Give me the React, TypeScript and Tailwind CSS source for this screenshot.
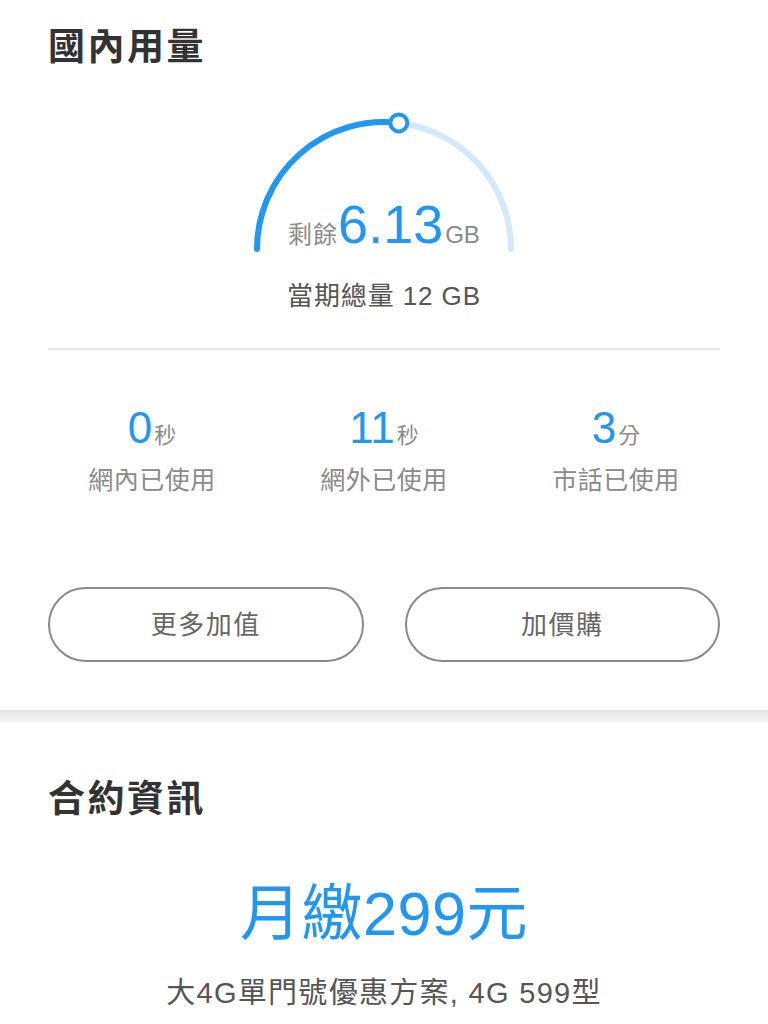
import React from "react";

function Gauge() {
  return (
    <div className="relative mx-auto mt-[42px] h-[150px] w-[280px]">
      <svg width="280" height="150" viewBox="0 0 280 150" className="absolute left-0 top-0">
        <path d="M 154.8 14.9 A 127 127 0 0 1 267 141" fill="none" stroke="#d4e8fc" strokeWidth="6" strokeLinecap="round" />
        <path d="M 13 141 A 127 127 0 0 1 154.8 14.9" fill="none" stroke="#2196f3" strokeWidth="6" strokeLinecap="round" />
        <circle cx="154.8" cy="14.9" r="8.5" fill="#ffffff" stroke="#2196f3" strokeWidth="4" />
      </svg>
      <div className="absolute inset-x-0 bottom-[7px] flex items-baseline justify-center">
        <span className="text-[24px] leading-none tracking-[1px] text-[#8a8a8a]">剩餘</span>
        <span className="text-[54px] leading-none text-[#2196f3]">6.13</span>
        <span className="ml-[2px] text-[24px] leading-none text-[#8a8a8a]">GB</span>
      </div>
    </div>
  );
}

function Stat({ value, unit }: { value: string; unit: string }) {
  return (
    <div className="flex items-baseline justify-center">
      <span className="text-[44px] leading-none text-[#2196f3]">{value}</span>
      <span className="ml-[2px] text-[22px] leading-none text-[#8a8a8a]">{unit}</span>
    </div>
  );
}

export default function App() {
  const stats = [
    { value: "0", unit: "秒", label: "網內已使用" },
    { value: "11", unit: "秒", label: "網外已使用" },
    { value: "3", unit: "分", label: "市話已使用" },
  ];
  return (
    <div className="min-h-[1024px] w-full bg-white font-['Liberation_Sans','Noto_Sans_CJK_TC',sans-serif]">
      <div className="flex flex-col pb-[48px] pt-[29px]">
        <h1 className="px-12 text-[37px] font-bold leading-none tracking-[2.5px] text-[#333333]">國內用量</h1>
        <Gauge />
        <div className="mt-[25px] text-center text-[26px] leading-none tracking-[0.9px] text-[#555555]">當期總量 12 GB</div>
        <div className="mx-12 mt-[39px] h-[2px] bg-[#e8e8e8]" />
        <div className="mt-[56px] grid grid-cols-3 px-9">
          {stats.map((s) => (
            <div key={s.label} className="flex flex-col items-center">
              <Stat value={s.value} unit={s.unit} />
              <div className="mt-[18px] text-[25px] leading-none tracking-[0.5px] text-[#8a8a8a]">{s.label}</div>
            </div>
          ))}
        </div>
        <div className="mt-[94px] grid grid-cols-2 gap-[41px] px-12">
          <button className="flex h-[75px] items-center justify-center rounded-full border-2 border-[#8a8a8a] text-[26px] leading-none tracking-[1.5px] text-[#666666]">
            更多加值
          </button>
          <button className="flex h-[75px] items-center justify-center rounded-full border-2 border-[#8a8a8a] text-[26px] leading-none tracking-[1.5px] text-[#666666]">
            加價購
          </button>
        </div>
      </div>
      <div className="h-[12px] bg-linear-to-b from-[#e3e3e3] to-[#f4f4f4]" />
      <div className="flex flex-col pt-[59px]">
        <h2 className="px-12 text-[37px] font-bold leading-none tracking-[2.5px] text-[#333333]">合約資訊</h2>
        <div className="mt-[66px] text-center text-[61px] leading-none tracking-[0.5px] text-[#2196f3]">月繳299元</div>
        <div className="mt-[34px] text-center text-[29px] leading-none tracking-[1.3px] text-[#555555]">大4G單門號優惠方案, 4G 599型</div>
      </div>
    </div>
  );
}
